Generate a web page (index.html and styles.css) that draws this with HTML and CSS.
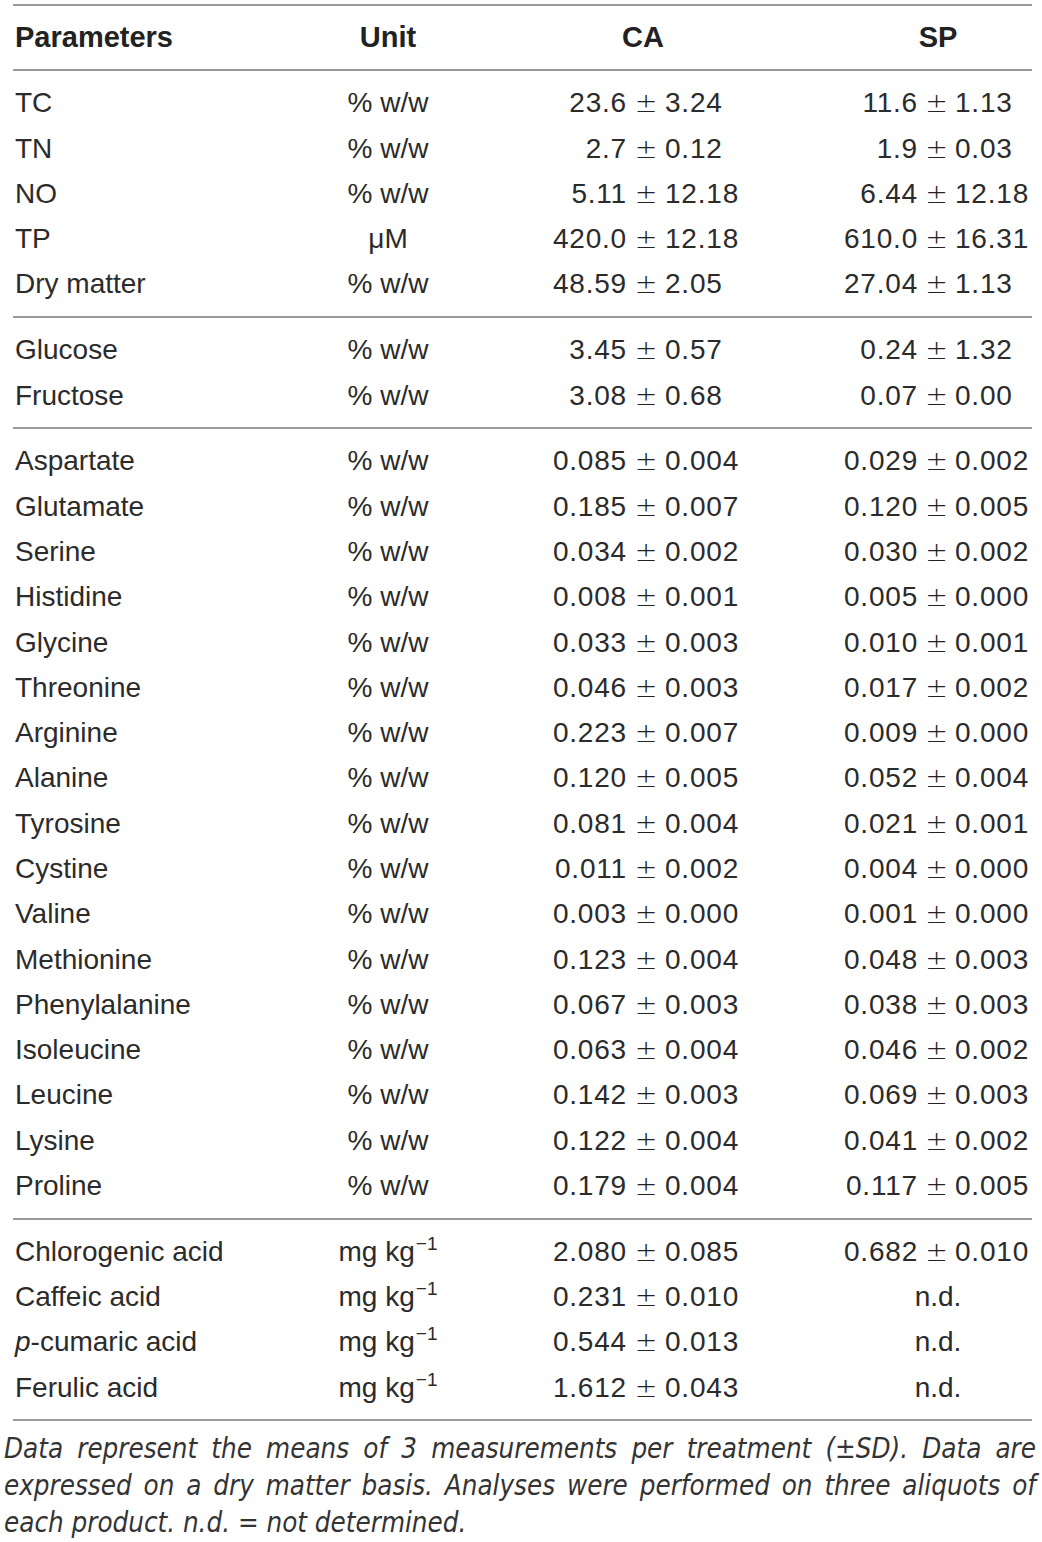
FILE: index.html
```html
<!DOCTYPE html>
<html lang="en">
<head>
<meta charset="utf-8">
<title>Table</title>
<link rel="stylesheet" href="styles.css">
</head>
<body>
<div class="table">
  <div class="row head">
    <div class="param">Parameters</div>
    <div class="unit">Unit</div>
    <div class="ca-all">CA</div>
    <div class="sp-all">SP</div>
  </div>

  <div class="section">
    <div class="row"><div class="param">TC</div><div class="unit">% w/w</div><div class="v cl">23.6</div><div class="pm c">±</div><div class="v cr">3.24</div><div class="v sl">11.6</div><div class="pm s">±</div><div class="v sr">1.13</div></div>
    <div class="row"><div class="param">TN</div><div class="unit">% w/w</div><div class="v cl">2.7</div><div class="pm c">±</div><div class="v cr">0.12</div><div class="v sl">1.9</div><div class="pm s">±</div><div class="v sr">0.03</div></div>
    <div class="row"><div class="param">NO</div><div class="unit">% w/w</div><div class="v cl">5.11</div><div class="pm c">±</div><div class="v cr">12.18</div><div class="v sl">6.44</div><div class="pm s">±</div><div class="v sr">12.18</div></div>
    <div class="row"><div class="param">TP</div><div class="unit">μM</div><div class="v cl">420.0</div><div class="pm c">±</div><div class="v cr">12.18</div><div class="v sl">610.0</div><div class="pm s">±</div><div class="v sr">16.31</div></div>
    <div class="row"><div class="param">Dry matter</div><div class="unit">% w/w</div><div class="v cl">48.59</div><div class="pm c">±</div><div class="v cr">2.05</div><div class="v sl">27.04</div><div class="pm s">±</div><div class="v sr">1.13</div></div>
  </div>

  <div class="section">
    <div class="row"><div class="param">Glucose</div><div class="unit">% w/w</div><div class="v cl">3.45</div><div class="pm c">±</div><div class="v cr">0.57</div><div class="v sl">0.24</div><div class="pm s">±</div><div class="v sr">1.32</div></div>
    <div class="row"><div class="param">Fructose</div><div class="unit">% w/w</div><div class="v cl">3.08</div><div class="pm c">±</div><div class="v cr">0.68</div><div class="v sl">0.07</div><div class="pm s">±</div><div class="v sr">0.00</div></div>
  </div>

  <div class="section">
    <div class="row"><div class="param">Aspartate</div><div class="unit">% w/w</div><div class="v cl">0.085</div><div class="pm c">±</div><div class="v cr">0.004</div><div class="v sl">0.029</div><div class="pm s">±</div><div class="v sr">0.002</div></div>
    <div class="row"><div class="param">Glutamate</div><div class="unit">% w/w</div><div class="v cl">0.185</div><div class="pm c">±</div><div class="v cr">0.007</div><div class="v sl">0.120</div><div class="pm s">±</div><div class="v sr">0.005</div></div>
    <div class="row"><div class="param">Serine</div><div class="unit">% w/w</div><div class="v cl">0.034</div><div class="pm c">±</div><div class="v cr">0.002</div><div class="v sl">0.030</div><div class="pm s">±</div><div class="v sr">0.002</div></div>
    <div class="row"><div class="param">Histidine</div><div class="unit">% w/w</div><div class="v cl">0.008</div><div class="pm c">±</div><div class="v cr">0.001</div><div class="v sl">0.005</div><div class="pm s">±</div><div class="v sr">0.000</div></div>
    <div class="row"><div class="param">Glycine</div><div class="unit">% w/w</div><div class="v cl">0.033</div><div class="pm c">±</div><div class="v cr">0.003</div><div class="v sl">0.010</div><div class="pm s">±</div><div class="v sr">0.001</div></div>
    <div class="row"><div class="param">Threonine</div><div class="unit">% w/w</div><div class="v cl">0.046</div><div class="pm c">±</div><div class="v cr">0.003</div><div class="v sl">0.017</div><div class="pm s">±</div><div class="v sr">0.002</div></div>
    <div class="row"><div class="param">Arginine</div><div class="unit">% w/w</div><div class="v cl">0.223</div><div class="pm c">±</div><div class="v cr">0.007</div><div class="v sl">0.009</div><div class="pm s">±</div><div class="v sr">0.000</div></div>
    <div class="row"><div class="param">Alanine</div><div class="unit">% w/w</div><div class="v cl">0.120</div><div class="pm c">±</div><div class="v cr">0.005</div><div class="v sl">0.052</div><div class="pm s">±</div><div class="v sr">0.004</div></div>
    <div class="row"><div class="param">Tyrosine</div><div class="unit">% w/w</div><div class="v cl">0.081</div><div class="pm c">±</div><div class="v cr">0.004</div><div class="v sl">0.021</div><div class="pm s">±</div><div class="v sr">0.001</div></div>
    <div class="row"><div class="param">Cystine</div><div class="unit">% w/w</div><div class="v cl">0.011</div><div class="pm c">±</div><div class="v cr">0.002</div><div class="v sl">0.004</div><div class="pm s">±</div><div class="v sr">0.000</div></div>
    <div class="row"><div class="param">Valine</div><div class="unit">% w/w</div><div class="v cl">0.003</div><div class="pm c">±</div><div class="v cr">0.000</div><div class="v sl">0.001</div><div class="pm s">±</div><div class="v sr">0.000</div></div>
    <div class="row"><div class="param">Methionine</div><div class="unit">% w/w</div><div class="v cl">0.123</div><div class="pm c">±</div><div class="v cr">0.004</div><div class="v sl">0.048</div><div class="pm s">±</div><div class="v sr">0.003</div></div>
    <div class="row"><div class="param">Phenylalanine</div><div class="unit">% w/w</div><div class="v cl">0.067</div><div class="pm c">±</div><div class="v cr">0.003</div><div class="v sl">0.038</div><div class="pm s">±</div><div class="v sr">0.003</div></div>
    <div class="row"><div class="param">Isoleucine</div><div class="unit">% w/w</div><div class="v cl">0.063</div><div class="pm c">±</div><div class="v cr">0.004</div><div class="v sl">0.046</div><div class="pm s">±</div><div class="v sr">0.002</div></div>
    <div class="row"><div class="param">Leucine</div><div class="unit">% w/w</div><div class="v cl">0.142</div><div class="pm c">±</div><div class="v cr">0.003</div><div class="v sl">0.069</div><div class="pm s">±</div><div class="v sr">0.003</div></div>
    <div class="row"><div class="param">Lysine</div><div class="unit">% w/w</div><div class="v cl">0.122</div><div class="pm c">±</div><div class="v cr">0.004</div><div class="v sl">0.041</div><div class="pm s">±</div><div class="v sr">0.002</div></div>
    <div class="row"><div class="param">Proline</div><div class="unit">% w/w</div><div class="v cl">0.179</div><div class="pm c">±</div><div class="v cr">0.004</div><div class="v sl">0.117</div><div class="pm s">±</div><div class="v sr">0.005</div></div>
  </div>

  <div class="section">
    <div class="row"><div class="param">Chlorogenic acid</div><div class="unit">mg kg<sup>−1</sup></div><div class="v cl">2.080</div><div class="pm c">±</div><div class="v cr">0.085</div><div class="v sl">0.682</div><div class="pm s">±</div><div class="v sr">0.010</div></div>
    <div class="row"><div class="param">Caffeic acid</div><div class="unit">mg kg<sup>−1</sup></div><div class="v cl">0.231</div><div class="pm c">±</div><div class="v cr">0.010</div><div class="nd">n.d.</div></div>
    <div class="row"><div class="param"><i>p</i>-cumaric acid</div><div class="unit">mg kg<sup>−1</sup></div><div class="v cl">0.544</div><div class="pm c">±</div><div class="v cr">0.013</div><div class="nd">n.d.</div></div>
    <div class="row"><div class="param">Ferulic acid</div><div class="unit">mg kg<sup>−1</sup></div><div class="v cl">1.612</div><div class="pm c">±</div><div class="v cr">0.043</div><div class="nd">n.d.</div></div>
  </div>
</div>
<p class="note"><span class="line">Data represent the means of 3 measurements per treatment (±SD). Data are</span> <span class="line">expressed on a dry matter basis. Analyses were performed on three aliquots of</span> <span class="last">each product. n.d. = not determined.</span></p>
</body>
</html>
```

FILE: styles.css
```css
html, body {
  margin: 0;
  padding: 0;
  background: #ffffff;
}

body {
  font-family: "Liberation Sans", Arial, sans-serif;
  color: #2b2b2b;
  font-size: 28px;
}

.table {
  margin: 4px 0 0 13px;
  width: 1019px;
  border-top: 2px solid #9a9a9a;
}

.row {
  display: grid;
  grid-template-columns: 287px 176px 151px 38px 145px 34px 74px 37px 77px;
  height: 45.3px;
  line-height: 45.3px;
  white-space: nowrap;
}

.head {
  height: 63px;
  line-height: 63px;
  font-weight: bold;
  font-size: 29px;
  color: #222;
  border-bottom: 2px solid #9a9a9a;
}

.section {
  padding: 9.25px 0;
  border-bottom: 2px solid #9a9a9a;
}

.param {
  grid-column: 1;
  padding-left: 2px;
}

.unit {
  grid-column: 2;
  text-align: center;
}

.ca-all {
  grid-column: 3 / 6;
  text-align: center;
}

.sp-all {
  grid-column: 7 / 10;
  text-align: center;
}

.v {
  letter-spacing: 0.8px;
}

.cl { grid-column: 3; text-align: right; }
.pm {
  text-align: center;
  font-family: "DejaVu Sans", sans-serif;
  font-weight: 300;
  font-size: 27px;
  color: #222;
}
.pm.c { grid-column: 4; }
.cr { grid-column: 5; text-align: left; }
.sl { grid-column: 7; text-align: right; }
.pm.s { grid-column: 8; }
.sr { grid-column: 9; text-align: left; }

.nd {
  grid-column: 7 / 10;
  text-align: center;
}

.unit sup {
  font-size: 19px;
  line-height: 0;
  vertical-align: 11px;
  margin-left: 1px;
}

.note {
  margin: 9px 0 0 4px;
  width: 1032px;
  font-family: "DejaVu Sans Condensed", "DejaVu Sans", sans-serif;
  font-stretch: condensed;
  font-style: italic;
  font-size: 27.5px;
  line-height: 37px;
  color: #333;
}

.note .line {
  display: block;
  white-space: nowrap;
  text-align: justify;
  text-align-last: justify;
}

.note .last {
  display: block;
}
```
